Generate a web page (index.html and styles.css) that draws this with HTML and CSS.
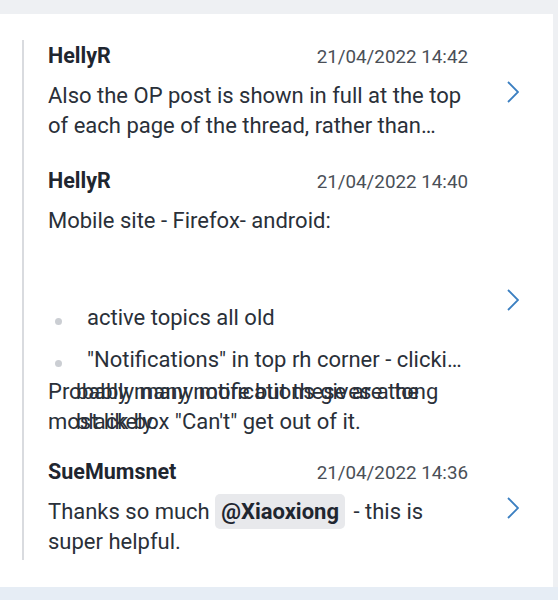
FILE: index.html
```html
<!DOCTYPE html>
<html lang="en">
<head>
<meta charset="utf-8">
<title>Thread</title>
<link rel="stylesheet" href="styles.css">
</head>
<body>
<div class="top-strip"></div>
<main class="card">
  <section class="thread">
    <article class="post">
      <div class="post-main">
        <div class="post-head"><span class="name">HellyR</span><span class="date">21/04/2022 14:42</span></div>
        <p class="text">Also the OP post is shown in full at the top of each page of the thread, rather than…</p>
      </div>
      <svg class="chev" viewBox="0 0 12 22" width="12" height="22"><polyline points="1,1 11,11 1,21" fill="none" stroke="#3b7fc1" stroke-width="1.8"/></svg>
    </article>
    <article class="post">
      <div class="post-main">
        <div class="post-head"><span class="name">HellyR</span><span class="date">21/04/2022 14:40</span></div>
        <p class="text">Mobile site - Firefox- android:</p>
        <ul class="bullets">
          <li><span class="li-text">active topics all old</span></li>
          <li><span class="li-text">"Notifications" in top rh corner - clicking on it gives a black box</span></li>
        </ul>
        <div class="glitch">
          <p class="layer">Probably many more but these are the<br>most likely.</p>
          <p class="layer layer-b">bably many notifications gives a tong<br>black box "Can't" get out of it.</p>
        </div>
      </div>
      <svg class="chev" viewBox="0 0 12 22" width="12" height="22"><polyline points="1,1 11,11 1,21" fill="none" stroke="#3b7fc1" stroke-width="1.8"/></svg>
    </article>
    <article class="post">
      <div class="post-main">
        <div class="post-head"><span class="name">SueMumsnet</span><span class="date">21/04/2022 14:36</span></div>
        <p class="text">Thanks so much <span class="mention">@Xiaoxiong</span> - this is super helpful.</p>
      </div>
      <svg class="chev" viewBox="0 0 12 22" width="12" height="22"><polyline points="1,1 11,11 1,21" fill="none" stroke="#3b7fc1" stroke-width="1.8"/></svg>
    </article>
  </section>
</main>
<div class="bottom-band"></div>
</body>
</html>
```
FILE: styles.css
```css
* { box-sizing: border-box; }
html, body { margin: 0; padding: 0; }
body {
  background: #eef0f3;
  font-family: Roboto, "Noto Sans", sans-serif;
  color: #2a3039;
  width: 558px;
  height: 600px;
  overflow: hidden;
}
.top-strip { height: 14px; }
.card {
  background: #ffffff;
  width: 553px;
  height: 573px;
  padding: 26px 0 0 22px;
}
.thread {
  border-left: 2px solid #d9dbdf;
  padding: 3px 0 3px 24px;
  display: flex;
  flex-direction: column;
  gap: 27px;
}
.post {
  display: flex;
  align-items: center;
}
.post-main {
  flex: 0 0 420px;
  width: 420px;
}
.chev {
  margin-left: 39px;
  flex: none;
}
.post-head {
  display: flex;
  justify-content: space-between;
  align-items: baseline;
  line-height: 26px;
}
.name {
  font-size: 21.5px;
  font-weight: 700;
  color: #1f2630;
}
.date {
  font-size: 18.8px;
  color: #4a4f57;
}
.text {
  margin: 11px 0 0;
  font-size: 22px;
  line-height: 30px;
}
.mention {
  background: #e8e9ec;
  border-radius: 5px;
  padding: 5px 6px;
  margin: 0 3px 0 0;
  font-weight: 700;
  color: #1f2630;
}
.bullets {
  list-style: none;
  margin: 67px 0 0;
  padding: 0;
  font-size: 22px;
  line-height: 30px;
}
.bullets li {
  display: flex;
  align-items: flex-start;
  margin-bottom: 12px;
}
.bullets li:last-child { margin-bottom: 0; }
.bullets li::before {
  content: "";
  flex: none;
  width: 7px;
  height: 7px;
  border-radius: 50%;
  background: #cbced3;
  margin: 15px 25px 0 7px;
}
.li-text {
  flex: 1;
  min-width: 0;
  white-space: nowrap;
  overflow: hidden;
  text-overflow: ellipsis;
}
.glitch {
  display: grid;
  margin: 2px 0 -5px;
  font-size: 22px;
  line-height: 30px;
}
.layer {
  grid-area: 1 / 1;
  margin: 0;
}
.layer-b {
  padding-left: 28px;
}
.bottom-band {
  height: 13px;
  background: #e6edf5;
}
```
